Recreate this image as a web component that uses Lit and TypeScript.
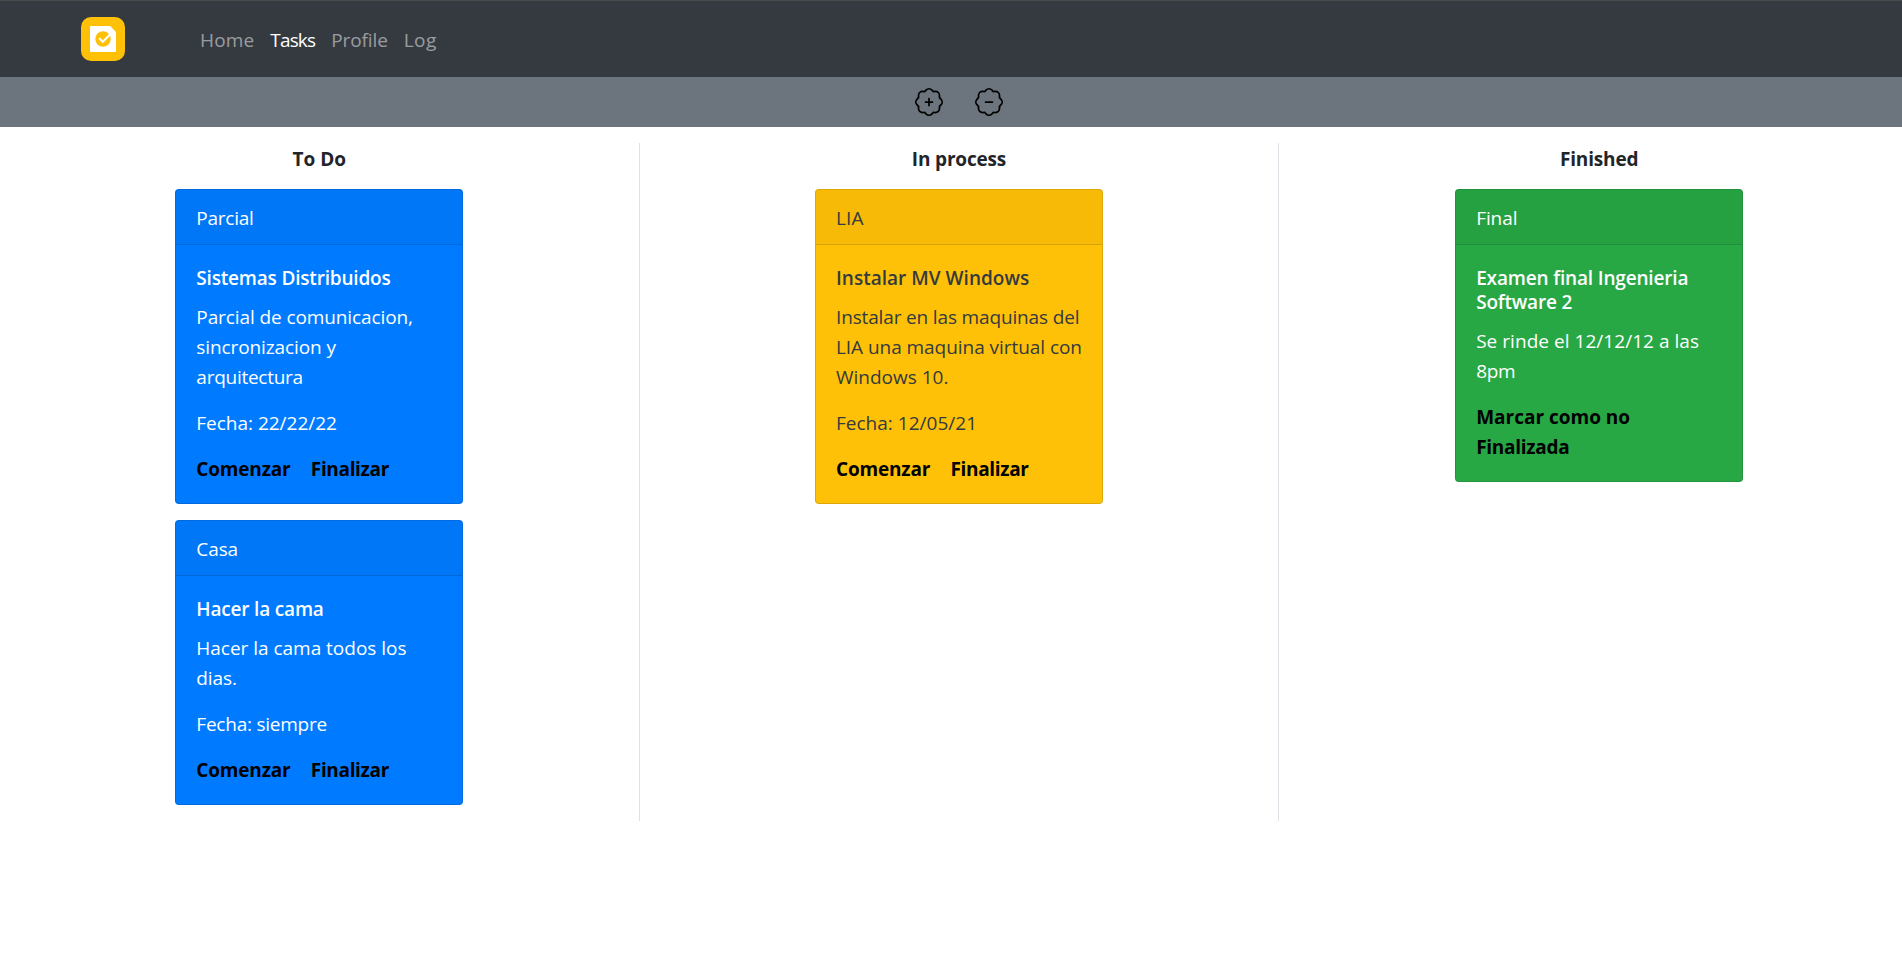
import { LitElement, html, css, svg } from "lit";
import { customElement, property } from "lit/decorators.js";
import { styleMap } from "lit/directives/style-map.js";

// A line of text together with its letter tracking in pixels.
type Line = [text: string, tracking: number];

interface Task {
  tone: "primary" | "warning" | "success";
  category: Line;
  title: Line[];
  description: Line[];
  date?: Line;
  finished?: boolean;
}

interface Column {
  name: Line;
  tasks: Task[];
}

const NAV: { label: Line; active?: boolean }[] = [
  { label: ["Home", 0.15] },
  { label: ["Tasks", -0.85], active: true },
  { label: ["Profile", -0.1] },
  { label: ["Log", 0.4] },
];

const COLUMNS: Column[] = [
  {
    name: ["To Do", 0],
    tasks: [
      {
        tone: "primary",
        category: ["Parcial", -0.25],
        title: [["Sistemas Distribuidos", -0.19]],
        description: [
          ["Parcial de comunicacion,", -0.1],
          ["sincronizacion y", -0.1],
          ["arquitectura", -0.26],
        ],
        date: ["Fecha: 22/22/22", -0.02],
      },
      {
        tone: "primary",
        category: ["Casa", -0.1],
        title: [["Hacer la cama", -0.18]],
        description: [
          ["Hacer la cama todos los", -0.02],
          ["dias.", -0.1],
        ],
        date: ["Fecha: siempre", -0.23],
      },
    ],
  },
  {
    name: ["In process", -0.17],
    tasks: [
      {
        tone: "warning",
        category: ["LIA", 0.15],
        title: [["Instalar MV Windows", 0.02]],
        description: [
          ["Instalar en las maquinas del", -0.15],
          ["LIA una maquina virtual con", -0.05],
          ["Windows 10.", 0],
        ],
        date: ["Fecha: 12/05/21", 0.02],
      },
    ],
  },
  {
    name: ["Finished", -0.15],
    tasks: [
      {
        tone: "success",
        category: ["Final", -0.07],
        title: [
          ["Examen final Ingenieria", -0.16],
          ["Software 2", -0.2],
        ],
        description: [
          ["Se rinde el 12/12/12 a las", 0.04],
          ["8pm", -0.3],
        ],
        finished: true,
      },
    ],
  },
];

const tracked = ([text, tracking]: Line) =>
  html`<span style=${styleMap({ letterSpacing: `${tracking}px` })}>${text}</span>`;

const lines = (items: Line[]) =>
  items.map((item, i) => (i ? html`<br />${tracked(item)}` : tracked(item)));

@customElement("task-card")
class TaskCard extends LitElement {
  @property({ attribute: false }) task!: Task;

  static styles = css`
    :host {
      display: block;
      margin-bottom: 16px;
    }
    .card {
      box-sizing: border-box;
      width: 288px;
      border: 1px solid rgba(0, 0, 0, 0.125);
      border-radius: 4px;
      white-space: nowrap;
      color: #fff;
    }
    .primary {
      background: #007bff;
    }
    .warning {
      background: #ffc107;
      color: #343a40;
    }
    .success {
      background: #28a745;
    }
    .header {
      padding: 13px 20px 11px;
      background: rgba(0, 0, 0, 0.03);
      border-bottom: 1px solid rgba(0, 0, 0, 0.125);
      border-radius: 3px 3px 0 0;
    }
    .body {
      padding: 21px 20px 19px;
    }
    .title {
      margin: 0 0 12px;
      font-size: inherit;
      font-weight: 600;
      line-height: 24px;
    }
    .text {
      margin: 0 0 16px;
    }
    .actions {
      display: grid;
      grid-template-columns: 114.5px auto;
    }
    .link {
      color: #000;
      font-weight: 700;
      text-decoration: none;
      cursor: pointer;
    }
  `;

  render() {
    const t = this.task;
    return html`
      <article class="card ${t.tone}">
        <div class="header">${tracked(t.category)}</div>
        <div class="body">
          <h5 class="title">${lines(t.title)}</h5>
          <p class="text">${lines(t.description)}</p>
          ${t.date ? html`<p class="text">${tracked(t.date)}</p>` : null}
          ${t.finished
            ? html`<a class="link">${lines([["Marcar como no", 0], ["Finalizada", -0.28]])}</a>`
            : html`<div class="actions">
                <a class="link">${tracked(["Comenzar", -0.18])}</a>
                <a class="link">${tracked(["Finalizar", -0.34])}</a>
              </div>`}
        </div>
      </article>
    `;
  }
}

const PATCH =
  "m10.273 2.513-.921-.944.715-.698.622.637.89-.011a2.89 2.89 0 0 1 2.924 2.924l-.01.89.636.622a2.89 2.89 0 0 1 0 4.134l-.637.622.011.89a2.89 2.89 0 0 1-2.924 2.924l-.89-.01-.622.636a2.89 2.89 0 0 1-4.134 0l-.622-.637-.89.011a2.89 2.89 0 0 1-2.924-2.924l.01-.89-.636-.622a2.89 2.89 0 0 1 0-4.134l.637-.622-.011-.89a2.89 2.89 0 0 1 2.924-2.924l.89.01.622-.636a2.89 2.89 0 0 1 4.134 0l-.715.698a1.89 1.89 0 0 0-2.704 0l-.92.944-1.32-.016a1.89 1.89 0 0 0-1.911 1.912l.016 1.318-.944.921a1.89 1.89 0 0 0 0 2.704l.944.92-.016 1.32a1.89 1.89 0 0 0 1.912 1.911l1.318-.016.921.944a1.89 1.89 0 0 0 2.704 0l.92-.944 1.32.016a1.89 1.89 0 0 0 1.911-1.912l-.016-1.318.944-.921a1.89 1.89 0 0 0 0-2.704l-.944-.92.016-1.32a1.89 1.89 0 0 0-1.912-1.911z";
const PLUS = svg`<path d="M8 5.5a.5.5 0 0 1 .5.5v1.5H10a.5.5 0 0 1 0 1H8.5V10a.5.5 0 0 1-1 0V8.5H6a.5.5 0 0 1 0-1h1.5V6a.5.5 0 0 1 .5-.5z"/>`;
const MINUS = svg`<path d="M5.5 8a.5.5 0 0 1 .5-.5h4a.5.5 0 0 1 0 1H6a.5.5 0 0 1-.5-.5z"/>`;

@customElement("app-root")
class AppRoot extends LitElement {
  static styles = css`
    :host {
      display: block;
      height: 100vh;
      overflow: hidden;
      background: #fff;
      color: #212529;
      font: 400 19px/30px "Open Sans", "Noto Sans", sans-serif;
    }
    .navbar {
      box-sizing: border-box;
      display: flex;
      align-items: center;
      height: 77px;
      padding: 1px 0 1px 81px;
      border-top: 1px solid #4b4c4d;
      background: #343a40;
    }
    .logo {
      display: block;
      width: 44px;
      height: 44px;
      margin-right: 75px;
    }
    .links {
      display: flex;
      margin: 2px 0 0;
      padding: 0;
      list-style: none;
      gap: 16px;
    }
    .nav-link {
      color: rgba(255, 255, 255, 0.5);
      text-decoration: none;
      cursor: pointer;
    }
    .active {
      color: #fff;
    }
    .toolbar {
      height: 50px;
      background: #6c757d;
    }
    .tools {
      display: flex;
      align-items: center;
      justify-content: center;
      gap: 32px;
      width: 1918px;
      height: 100%;
    }
    .tool {
      display: block;
      width: 28px;
      height: 28px;
      fill: #000;
    }
    .board {
      display: grid;
      grid-template-columns: repeat(3, 1fr);
      width: 1919px;
      margin-top: 16px;
    }
    .column {
      display: flex;
      flex-direction: column;
      align-items: center;
    }
    .column:not(:last-child) {
      border-right: 1px solid #dee2e6;
    }
    .heading {
      margin: 0;
      padding: 1px 0 15px;
      font-size: inherit;
      font-weight: 700;
    }
  `;

  render() {
    return html`
      <nav class="navbar">
        <svg class="logo" viewBox="0 0 44 44">
          <rect width="44" height="44" rx="10" fill="#ffc107" />
          <path d="M10.2 9H29.2L35 15V33.8Q35 35 33.8 35H10.2Q9 35 9 33.8V10.2Q9 9 10.2 9Z" fill="#fff" />
          <circle cx="22" cy="22" r="7.7" fill="#ffc107" />
          <path d="M18.2 21.2L21.8 24.8L30.2 16.2" fill="none" stroke="#fff" stroke-width="2" />
        </svg>
        <ul class="links">
          ${NAV.map(
            (n) => html`<li><a class="nav-link ${n.active ? "active" : ""}">${tracked(n.label)}</a></li>`
          )}
        </ul>
      </nav>
      <div class="toolbar">
        <div class="tools">
          <svg class="tool" viewBox="0 0 16 16"><path d=${PATCH} />${PLUS}</svg>
          <svg class="tool" viewBox="0 0 16 16"><path d=${PATCH} />${MINUS}</svg>
        </div>
      </div>
      <main class="board">
        ${COLUMNS.map(
          (c) => html`<section class="column">
            <h2 class="heading">${tracked(c.name)}</h2>
            ${c.tasks.map((t) => html`<task-card .task=${t}></task-card>`)}
          </section>`
        )}
      </main>
    `;
  }
}
